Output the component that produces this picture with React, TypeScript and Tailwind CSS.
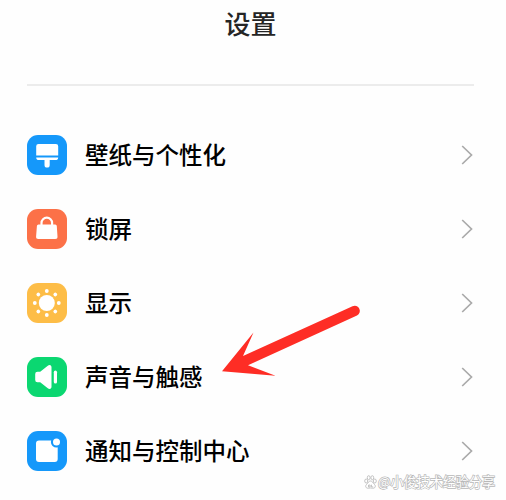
import type { ReactNode } from 'react';

const WallpaperIcon = () => (
  <svg viewBox="0 0 40 40" className="size-full" fill="#fff">
    <path d="M11.5 9h17.4a2.3 2.3 0 0 1 2.3 2.3v9.3h-22v-9.3A2.3 2.3 0 0 1 11.5 9Z" />
    <path d="M9.2 22.4h22a2.8 2.8 0 0 1-2.8 2.7h-5.7v4.8a2.6 2.6 0 0 1-5.2 0v-4.8H12a2.8 2.8 0 0 1-2.8-2.7Z" />
  </svg>
);

const LockIcon = () => (
  <svg viewBox="0 0 40 40" className="size-full">
    <path d="M14.5 18v-4a5.3 5.3 0 0 1 10.6 0v4" fill="none" stroke="#fff" strokeWidth="2.2" />
    <path d="M11.5 15.4h16.7a1.6 1.6 0 0 1 1.6 1.5l.7 10.6a2.3 2.3 0 0 1-2.3 2.5H11.4a2.3 2.3 0 0 1-2.3-2.5l.8-10.6a1.6 1.6 0 0 1 1.6-1.5Z" fill="#fff" />
  </svg>
);

const SunIcon = () => (
  <svg viewBox="0 0 40 40" className="size-full" fill="#fff">
    <circle cx="19.8" cy="20" r="8" />
    {[0, 45, 90, 135, 180, 225, 270, 315].map((angle) => (
      <circle key={angle} cx="19.8" cy="8" r="1.9" transform={`rotate(${angle} 19.8 20)`} />
    ))}
  </svg>
);

const SoundIcon = () => (
  <svg viewBox="0 0 40 40" className="size-full" fill="#fff">
    <path d="M10.5 14.7h2.7l7.6-6c1.7-1.3 3.7-.5 3.7 1.6v19.4c0 2.1-2 2.9-3.7 1.6l-7.6-6h-2.7a2.3 2.3 0 0 1-2.3-2.3v-6a2.3 2.3 0 0 1 2.3-2.3Z" />
    <rect x="26.8" y="13.6" width="3.2" height="13" rx="1.6" />
  </svg>
);

const NoticeIcon = () => (
  <svg viewBox="0 0 40 40" className="size-full">
    <rect x="9" y="9.4" width="21.7" height="21.7" rx="3" fill="#fff" />
    <circle cx="29.5" cy="11" r="5.6" fill="#1598fa" />
    <circle cx="29.5" cy="11" r="3.5" fill="#fff" />
  </svg>
);

const rows: { label: string; color: string; icon: ReactNode }[] = [
  { label: '壁纸与个性化', color: 'bg-[#1598fa]', icon: <WallpaperIcon /> },
  { label: '锁屏', color: 'bg-[#fc7148]', icon: <LockIcon /> },
  { label: '显示', color: 'bg-[#fdbd47]', icon: <SunIcon /> },
  { label: '声音与触感', color: 'bg-[#0bd771]', icon: <SoundIcon /> },
  { label: '通知与控制中心', color: 'bg-[#1598fa]', icon: <NoticeIcon /> },
];

export default function App() {
  return (
    <div className="relative h-[500px] w-[506px] overflow-hidden bg-[#fefefe] font-['Noto_Sans_CJK_SC',sans-serif] text-black">
      <header className="ml-[27px] flex h-[86px] w-[447px] justify-center border-b-2 border-[#ececec]">
        <h1 className="mt-1 text-[26px] leading-[38px] font-medium text-[#252525]">设置</h1>
      </header>
      <ul className="mt-[31.5px] ml-[27px] w-[447px]">
        {rows.map(({ label, color, icon }) => (
          <li key={label} className="flex h-[74.2px] items-center">
            <span className={`size-10 shrink-0 overflow-hidden rounded-[11px] ${color}`}>{icon}</span>
            <span className="ml-[18px] pb-[2px] text-[23.5px] leading-8 font-medium whitespace-nowrap">{label}</span>
            <svg viewBox="0 0 12 20" className="mr-[1px] ml-auto h-5 w-3" fill="none" stroke="#aaa" strokeWidth="1.7">
              <path d="M1.2 1 10.5 10 1.2 19" />
            </svg>
          </li>
        ))}
      </ul>
      <svg viewBox="0 0 160 90" className="absolute top-[295px] left-[210px] h-[90px] w-[160px]" fill="#fe2d25">
        <path d="M12 76.2 43.5 37.5 33 61 142.5 11.3a5.1 5.1 0 0 1 4.5 9.2L38 70.3 65.5 80.7Z" />
      </svg>
      <div className="absolute top-[472px] left-[364px] flex h-5 items-center gap-[1px] text-white">
        <svg viewBox="0 0 13 14" className="h-[14px] w-[13px]" fill="#fff" stroke="#b5b5b5" strokeWidth=".8">
          <ellipse cx="2.2" cy="6" rx="1.5" ry="2" />
          <ellipse cx="4.7" cy="2.7" rx="1.4" ry="2" />
          <ellipse cx="8.3" cy="2.7" rx="1.4" ry="2" />
          <ellipse cx="10.8" cy="6" rx="1.5" ry="2" />
          <path d="M6.5 6c2 0 2.4 2 4 3.5 1.8 1.8.3 4-1.7 3.7-1.7-.3-2.9-.3-4.6 0-2 .3-3.5-1.9-1.7-3.7C4.1 8 4.5 6 6.5 6Z" />
          <path d="M4.5 10h1.6v2H4.5ZM7.5 9.7v2.2h1.7" fill="none" />
        </svg>
        <span className="text-[13.1px] leading-5 whitespace-nowrap [-webkit-text-stroke:1.4px_#b8b8b8] [paint-order:stroke_fill]">
          @小俊技术经验分享
        </span>
      </div>
    </div>
  );
}
